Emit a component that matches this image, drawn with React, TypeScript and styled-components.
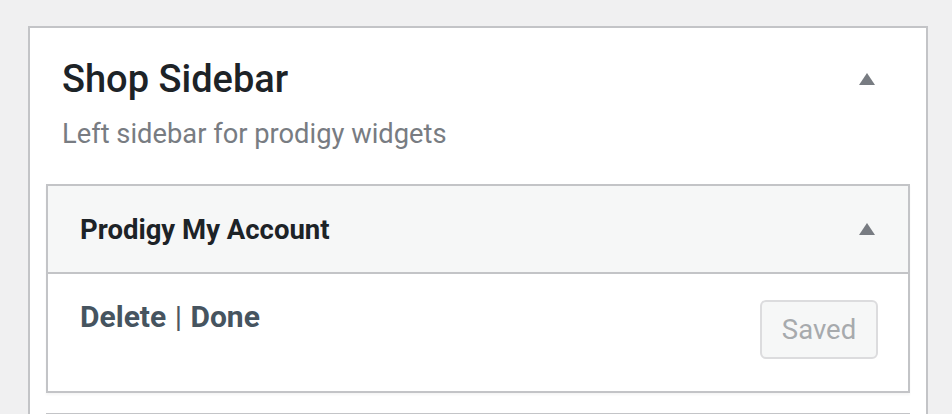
import React from "react";
import styled, { createGlobalStyle } from "styled-components";

const GlobalStyle = createGlobalStyle`
	html, body {
		margin: 0;
		padding: 0;
		background: #f0f0f1;
		font-family: Roboto, "Noto Sans", sans-serif;
		-webkit-font-smoothing: antialiased;
	}
`;

const Page = styled.div`
	height: 414px;
	overflow: hidden;
	box-sizing: border-box;
	padding: 26px 24px 0 28px;
`;

const SidebarPanel = styled.div`
	width: 900px;
	min-height: 420px;
	box-sizing: border-box;
	border: 2px solid #c3c4c7;
	border-bottom: none;
	background: #fff;
	padding: 0 16px;
`;

const SidebarHeader = styled.div`
	display: flex;
	align-items: center;
	justify-content: space-between;
	padding: 24px 35px 0 16px;
`;

const SidebarTitle = styled.h2`
	margin: 0;
	font-size: 38px;
	line-height: 54px;
	font-weight: 500;
	color: #1d2327;
`;

const Description = styled.p`
	margin: 10px 0 0 16px;
	font-size: 27.3px;
	line-height: 36px;
	color: #787c82;
`;

const WidgetList = styled.div`
	margin-top: 32px;
	display: flex;
	flex-direction: column;
	gap: 20px;
`;

const Widget = styled.div`
	border: 2px solid #c3c4c7;
	background: #fff;
	box-shadow: 0 2px 2px rgba(0, 0, 0, 0.04);
`;

const WidgetTop = styled.div`
	height: 88px;
	box-sizing: border-box;
	display: flex;
	align-items: center;
	justify-content: space-between;
	padding: 0 33px 0 32px;
	background: #f6f7f7;
	border-bottom: 2px solid #c3c4c7;
`;

const WidgetTitle = styled.h3`
	margin: 0;
	font-size: 27.5px;
	font-weight: 700;
	color: #1d2327;
`;

const WidgetBody = styled.div`
	height: 117px;
	box-sizing: border-box;
	display: flex;
	align-items: flex-start;
	justify-content: space-between;
	padding: 22px 30px 0 32px;
`;

const Actions = styled.div`
	font-size: 30px;
	line-height: 42px;
	font-weight: 700;
	color: #46545f;
`;

const ActionLink = styled.a`
	color: inherit;
	text-decoration: none;
	cursor: pointer;
`;

const Divider = styled.span`
	font-weight: 400;
	color: #50575e;
	margin: 0 1px;
`;

const SaveButton = styled.button`
	margin-top: 4px;
	width: 118px;
	height: 59px;
	box-sizing: border-box;
	border: 2px solid #dcdcde;
	border-radius: 6px;
	background: #f6f7f7;
	color: #a7aaad;
	font-family: inherit;
	font-size: 27.5px;
	padding: 0;
	cursor: default;
`;

const Toggle = styled.svg`
	width: 16px;
	height: 12px;
	flex-shrink: 0;
`;

function ToggleArrow() {
	return (
		<Toggle viewBox="0 0 16 12">
			<polygon points="8,0 16,12 0,12" fill="#787c82" />
		</Toggle>
	);
}

function App() {
	return (
		<>
			<GlobalStyle />
			<Page>
				<SidebarPanel>
					<SidebarHeader>
						<SidebarTitle>Shop Sidebar</SidebarTitle>
						<ToggleArrow />
					</SidebarHeader>
					<Description>Left sidebar for prodigy widgets</Description>
					<WidgetList>
						<Widget>
							<WidgetTop>
								<WidgetTitle>Prodigy My Account</WidgetTitle>
								<ToggleArrow />
							</WidgetTop>
							<WidgetBody>
								<Actions>
									<ActionLink>Delete</ActionLink>
									<Divider> | </Divider>
									<ActionLink>Done</ActionLink>
								</Actions>
								<SaveButton disabled>Saved</SaveButton>
							</WidgetBody>
						</Widget>
						<Widget>
							<WidgetTop />
						</Widget>
					</WidgetList>
				</SidebarPanel>
			</Page>
		</>
	);
}

export default App;
